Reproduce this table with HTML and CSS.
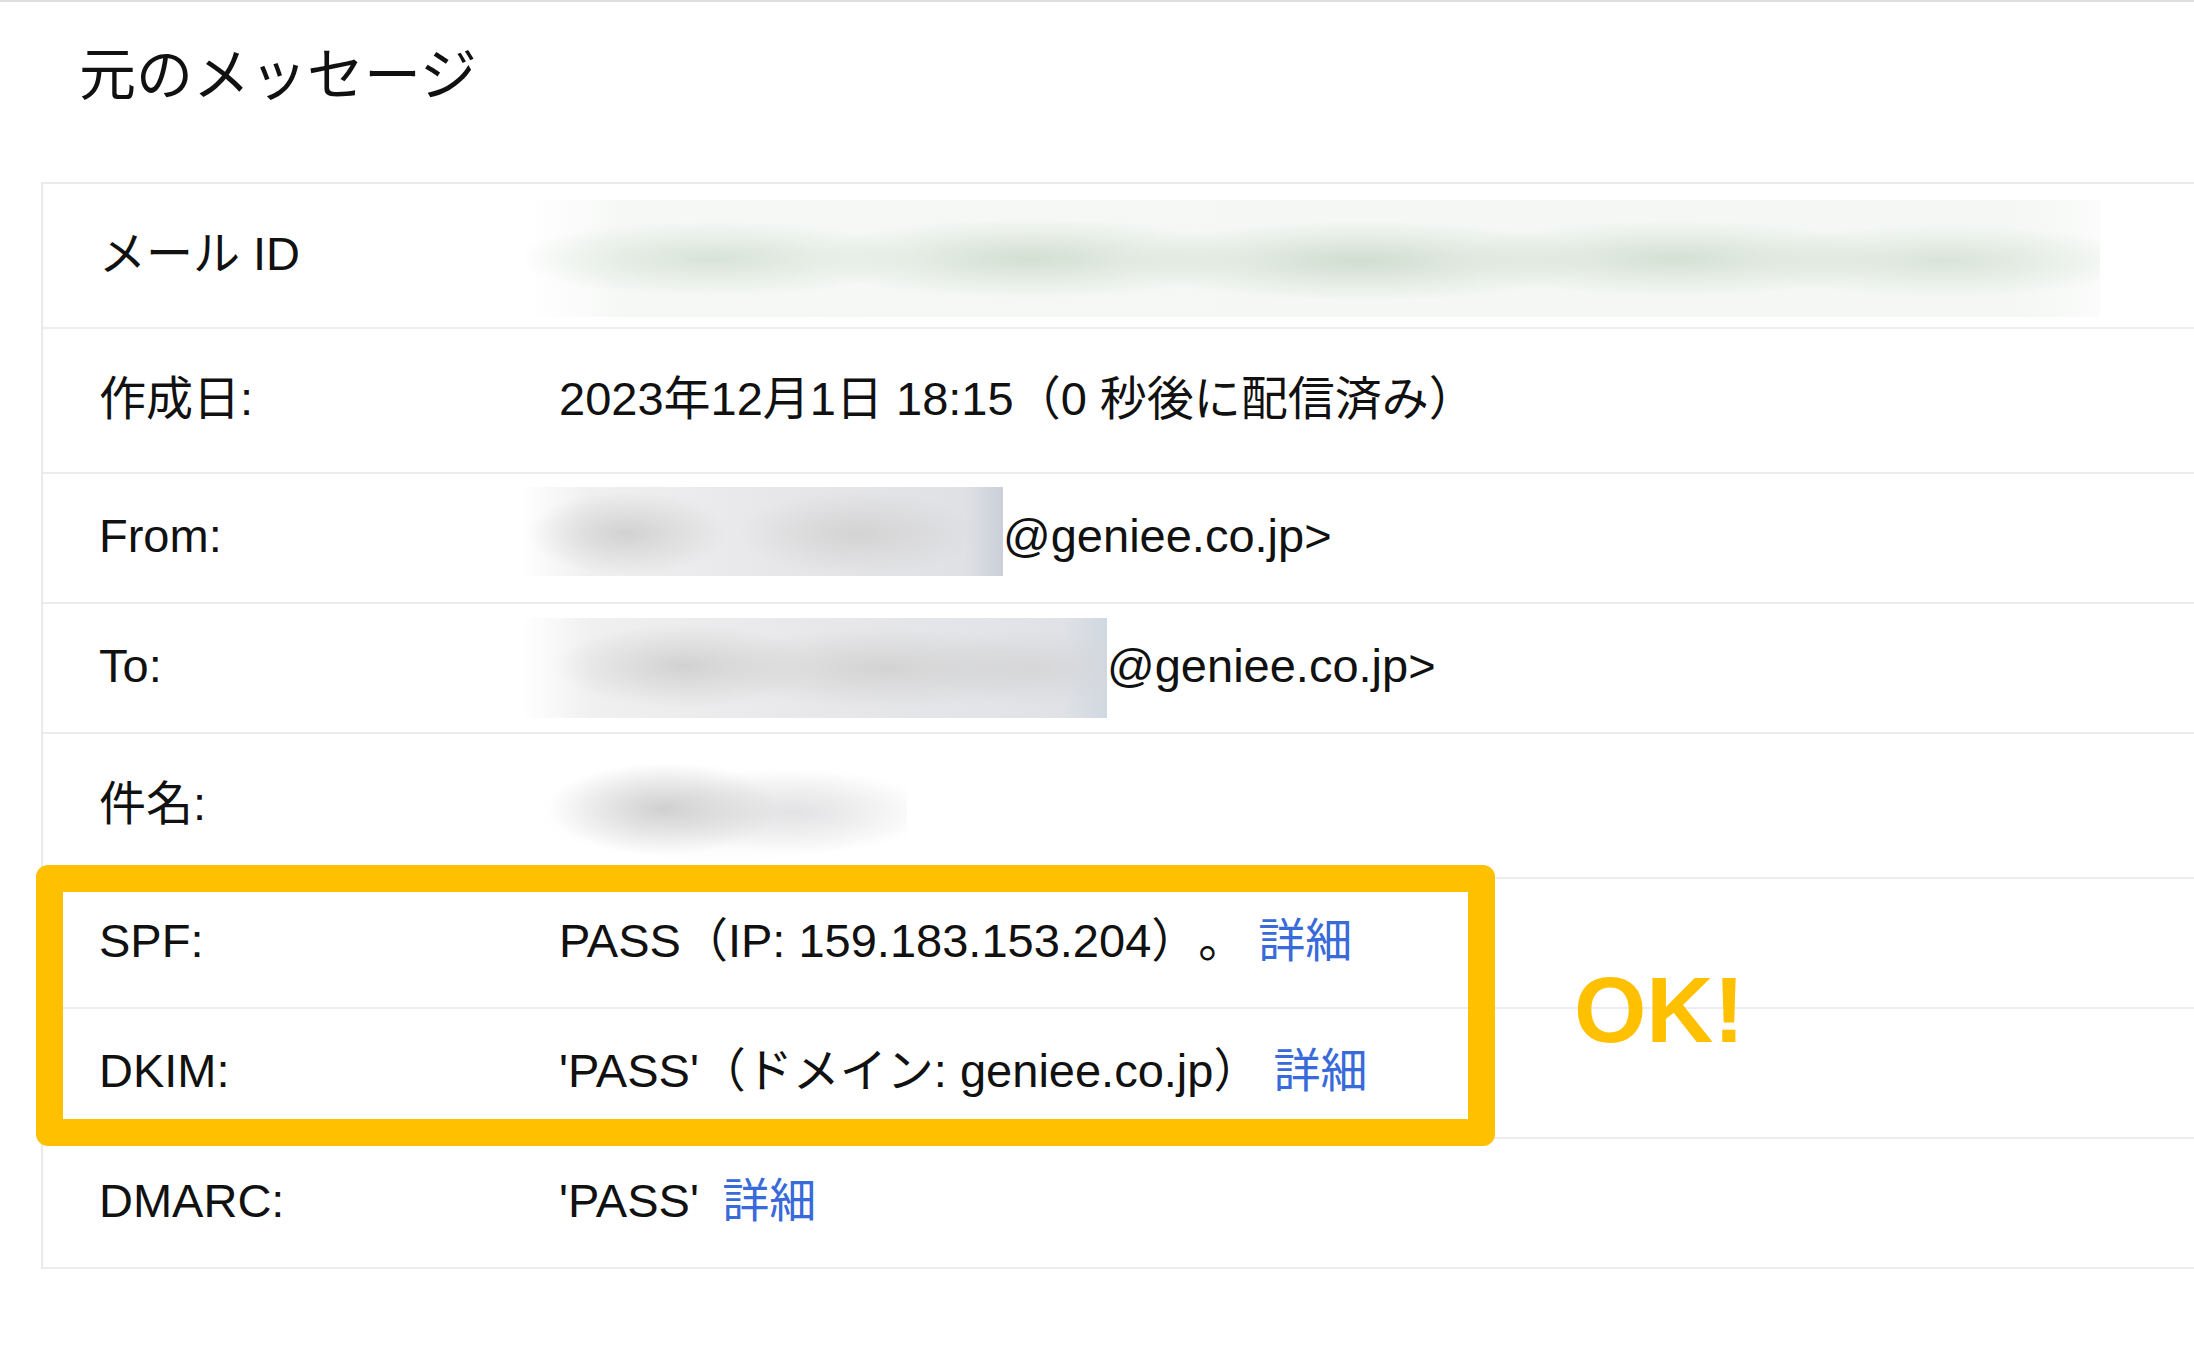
FILE: index.html
```html
<!DOCTYPE html>
<html lang="ja">
<head>
    <meta charset="utf-8">
    <link rel="stylesheet" href="styles.css">
</head>
<body>
    <h1 class="title">元のメッセージ</h1>

    <div class="headers">
        <div class="row tall">
            <div class="label">メール ID</div>
            <div class="value"><span class="redact redact-id"></span></div>
        </div>
        <div class="row tall">
            <div class="label">作成日:</div>
            <div class="value">2023年12月1日 18:15（0 秒後に配信済み）</div>
        </div>
        <div class="row">
            <div class="label">From:</div>
            <div class="value"><span class="redact redact-from"></span><span>@geniee.co.jp&gt;</span></div>
        </div>
        <div class="row">
            <div class="label">To:</div>
            <div class="value"><span class="redact redact-to"></span><span>@geniee.co.jp&gt;</span></div>
        </div>
        <div class="row tall">
            <div class="label">件名:</div>
            <div class="value"><span class="redact redact-subject"></span></div>
        </div>

        <!-- SPF / DKIM are marked with the yellow frame -->
        <div class="auth">
            <div class="row">
                <div class="label">SPF:</div>
                <div class="value">PASS（IP: 159.183.153.204）。&nbsp;<a class="more" href="#">詳細</a></div>
            </div>
            <div class="row">
                <div class="label">DKIM:</div>
                <div class="value">'PASS'（ドメイン: geniee.co.jp）&nbsp;<a class="more" href="#">詳細</a></div>
            </div>
            <div class="highlight"></div>
            <span class="ok">OK!</span>
        </div>

        <div class="row">
            <div class="label">DMARC:</div>
            <div class="value">'PASS'&ensp;<a class="more" href="#">詳細</a></div>
        </div>
    </div>
</body>
</html>
```

FILE: styles.css
```css
body{
    margin: 0;
    border-top: 2px solid rgb(224, 224, 224);
    background-color: white;
    color: #111;
    font-family: "Liberation Sans", "Noto Sans CJK JP", sans-serif;
    font-size: 47px;
    line-height: 54px;
    overflow: hidden;
}

.title{
    margin: 0;
    height: 180px;
    box-sizing: border-box;
    padding-top: 45px;
    padding-left: 79px;
    font-size: 57px;
    font-weight: normal;
    line-height: 57px;
}

.headers{
    margin-left: 41px;
    border-top: 2px solid rgb(234, 234, 234);
    border-left: 2px solid rgb(234, 234, 234);
}

.row{
    display: flex;
    align-items: center;
    height: 130px;
    box-sizing: border-box;
    padding-bottom: 4px;
    border-bottom: 2px solid rgb(236, 236, 236);
}

.row.tall{
    height: 145px;
}

.label{
    width: 516px;
    flex-shrink: 0;
    box-sizing: border-box;
    padding-left: 56px;
}

.value{
    display: flex;
    align-items: center;
    white-space: nowrap;
    text-spacing-trim: space-all;
}

.more{
    color: rgb(56, 106, 218);
    text-decoration: none;
}

/* blurred-out personal data */
.redact{
    display: block;
    flex-shrink: 0;
}

.redact-id{
    width: 1574px;
    height: 117px;
    margin-left: -33px;
    margin-top: 10px;
    background:
        radial-gradient(ellipse 200px 38px at 12% 50%, rgba(212, 225, 212, 0.9), transparent),
        radial-gradient(ellipse 220px 40px at 32% 50%, rgba(208, 222, 208, 0.95), transparent),
        radial-gradient(ellipse 240px 40px at 53% 52%, rgba(206, 220, 206, 0.95), transparent),
        radial-gradient(ellipse 220px 38px at 73% 50%, rgba(210, 223, 210, 0.95), transparent),
        radial-gradient(ellipse 200px 36px at 90% 52%, rgba(214, 226, 214, 0.9), transparent),
        linear-gradient(90deg, white, rgb(246, 248, 246) 6%, rgb(244, 247, 244) 94%, rgb(250, 251, 250));
}

.redact-from{
    width: 482px;
    height: 89px;
    margin-left: -38px;
    margin-bottom: 9px;
    background:
        radial-gradient(ellipse 100px 42px at 22% 52%, rgba(208, 208, 208, 0.95), transparent),
        radial-gradient(ellipse 120px 42px at 70% 52%, rgba(210, 210, 210, 0.95), transparent),
        linear-gradient(90deg, white, rgb(240, 240, 241) 14%, rgb(232, 232, 234) 50%, rgb(224, 225, 229) 92%, rgb(202, 207, 216));
}

.redact-to{
    width: 586px;
    height: 100px;
    margin-left: -38px;
    margin-top: 4px;
    background:
        radial-gradient(ellipse 130px 42px at 28% 48%, rgba(208, 208, 208, 0.95), transparent),
        radial-gradient(ellipse 170px 40px at 62% 50%, rgba(210, 210, 210, 0.95), transparent),
        radial-gradient(ellipse 110px 38px at 88% 50%, rgba(214, 214, 216, 0.95), transparent),
        linear-gradient(90deg, white, rgb(240, 240, 241) 12%, rgb(232, 232, 234) 50%, rgb(224, 226, 230) 92%, rgb(208, 216, 224));
}

.redact-subject{
    width: 374px;
    height: 97px;
    margin-left: -26px;
    margin-top: 19px;
    background:
        radial-gradient(ellipse 115px 46px at 35% 45%, rgba(206, 206, 206, 0.95), transparent),
        radial-gradient(ellipse 140px 42px at 70% 48%, rgba(224, 224, 226, 0.9), transparent),
        radial-gradient(ellipse 190px 50px at 50% 50%, rgba(244, 244, 245, 0.9), transparent);
}

/* annotation over SPF / DKIM */
.auth{
    position: relative;
}

.highlight{
    position: absolute;
    left: -7px;
    top: -14px;
    width: 1459px;
    height: 281px;
    box-sizing: border-box;
    border: 27px solid rgb(255, 192, 0);
    border-radius: 12px;
}

.ok{
    position: absolute;
    left: 1531px;
    top: 85px;
    color: rgb(255, 192, 0);
    font-size: 93px;
    font-weight: bold;
    line-height: 93px;
}
```
